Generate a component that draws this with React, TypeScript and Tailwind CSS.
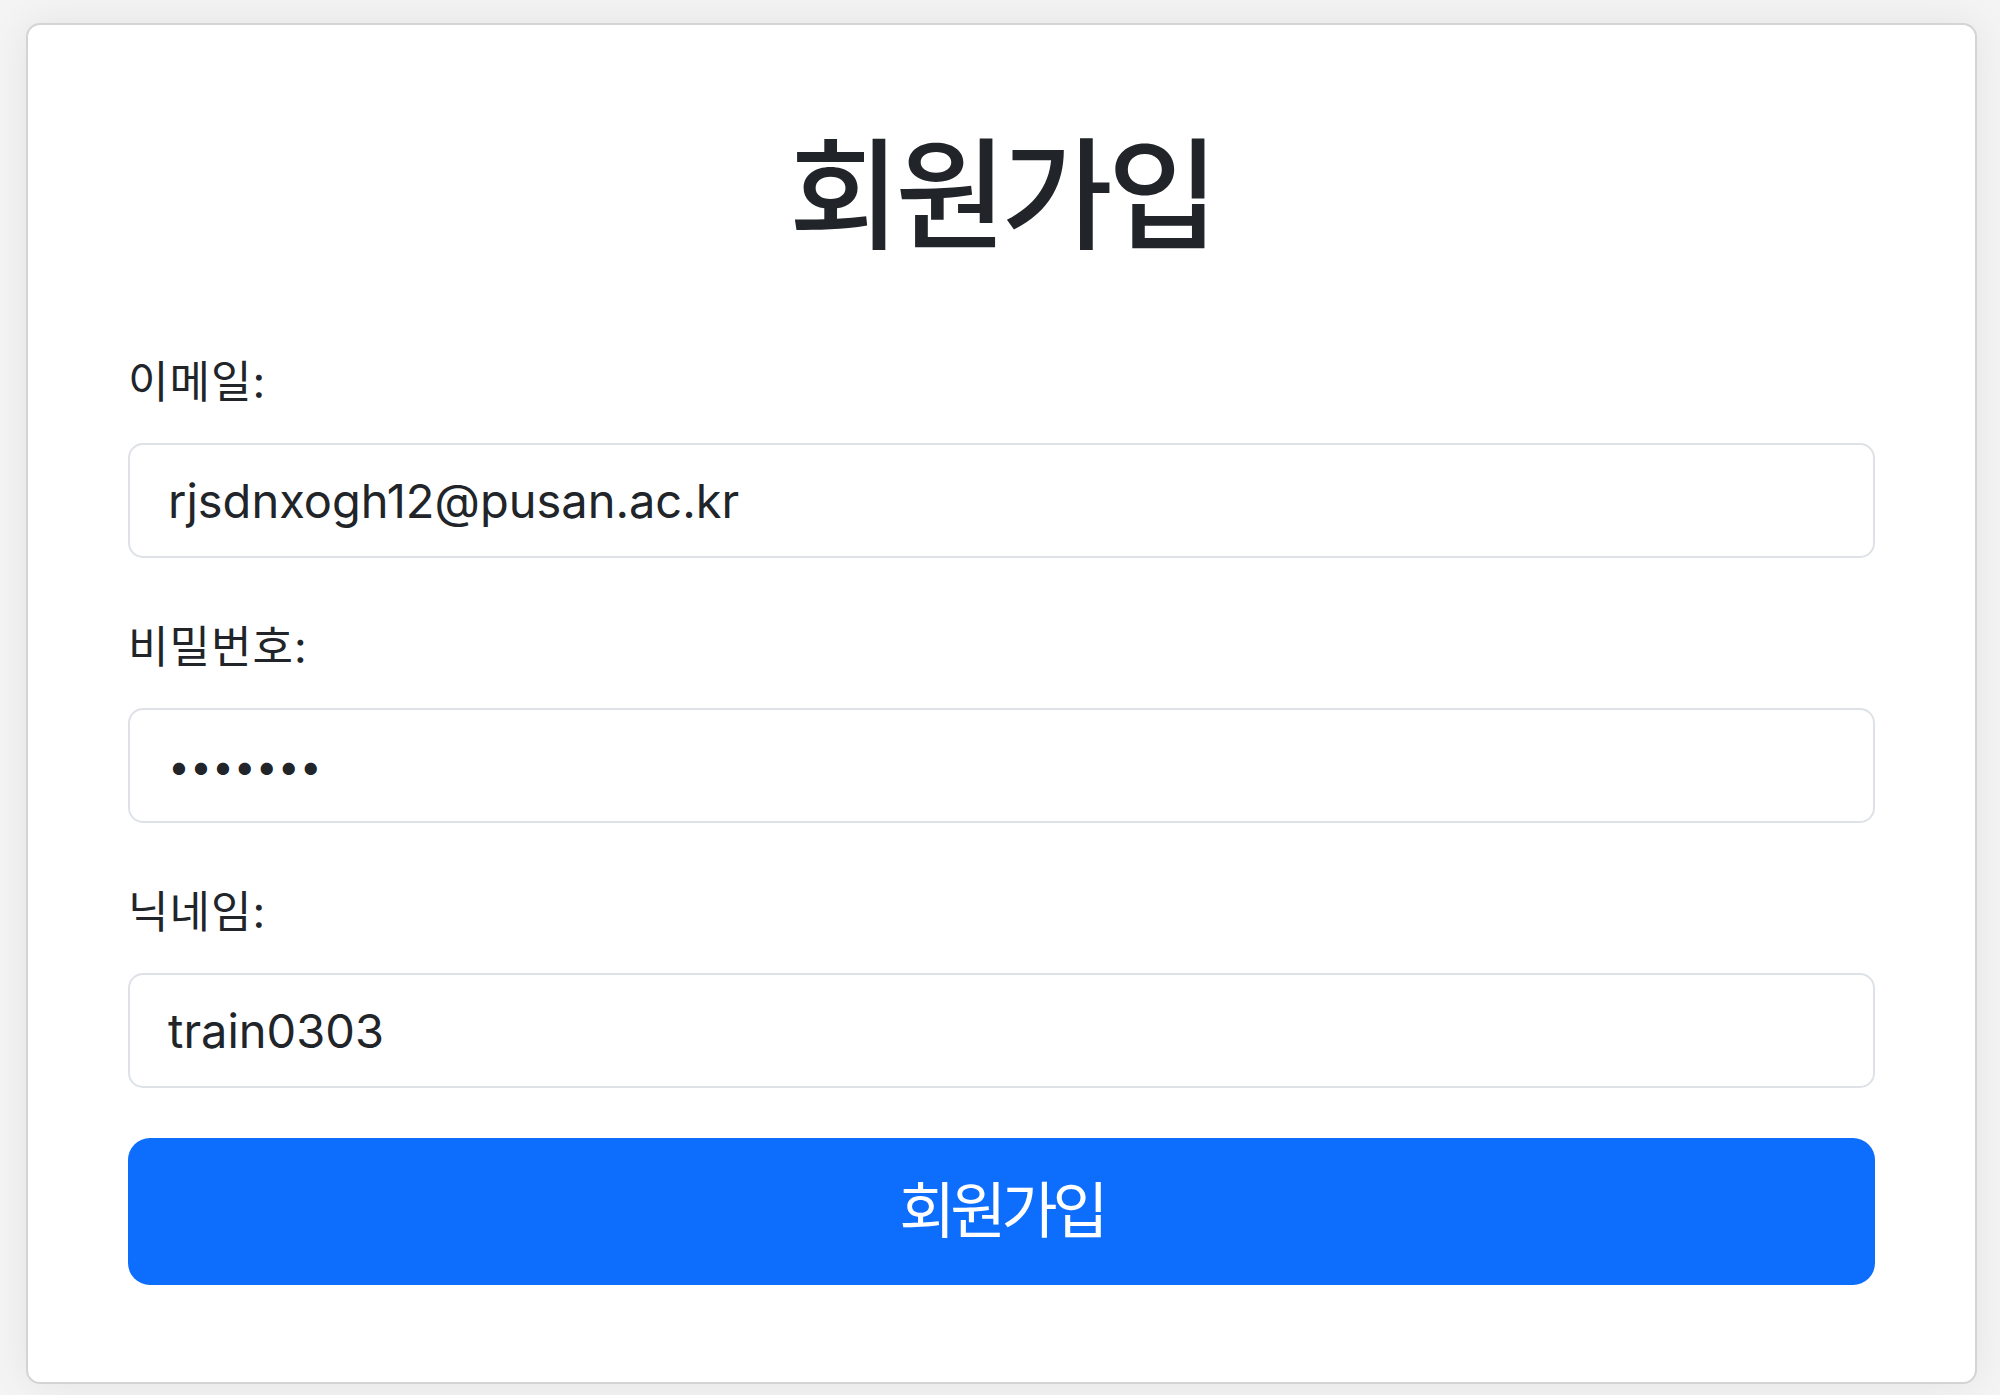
import React from 'react';

const fieldClass =
  'w-full h-[115px] border-2 border-[#dee2e6] rounded-[15px] bg-white px-[38px] text-[47px] text-[#212529] outline-none';

const Field = ({ label, children }: { label: string; children: React.ReactNode }) => (
  <div className="flex flex-col">
    <label className="h-[82px] mb-[20px] text-[44px] tracking-[1px] text-[#212529] leading-[82px]">
      {label}
    </label>
    {children}
  </div>
);

export default function App() {
  return (
    <div
      className="min-h-screen bg-[#f4f4f4] pt-[23px] pl-[26px]"
      style={{ fontFamily: 'Inter, "Noto Sans CJK KR", sans-serif' }}
    >
      <div className="w-[1951px] h-[1361px] bg-white border-2 border-[#d4d4d4] rounded-[14px] shadow-[0_0_40px_rgba(0,0,0,0.07)] px-[100px] pt-[90px]">
        {/* Title */}
        <h1 className="text-center text-[121px] font-medium tracking-[-5px] leading-[160px] text-[#212529]">
          회원가입
        </h1>

        <form className="mt-[66px] flex flex-col gap-[48px]" onSubmit={(e) => e.preventDefault()}>
          <Field label="이메일:">
            <input type="email" readOnly value="rjsdnxogh12@pusan.ac.kr" className={fieldClass} />
          </Field>
          <Field label="비밀번호:">
            <input
              type="password"
              readOnly
              value="1234567"
              className="w-full h-[115px] border-2 border-[#dee2e6] rounded-[15px] bg-white px-[38px] text-[39px] text-[#212529] outline-none"
            />
          </Field>
          <Field label="닉네임:">
            <input type="text" readOnly value="train0303" className={fieldClass} />
          </Field>
        </form>

        <button className="mt-[50px] w-full h-[147px] rounded-[22px] bg-[#0d6efd] text-white text-[61px] tracking-[-5px]">
          회원가입
        </button>
      </div>
    </div>
  );
}
